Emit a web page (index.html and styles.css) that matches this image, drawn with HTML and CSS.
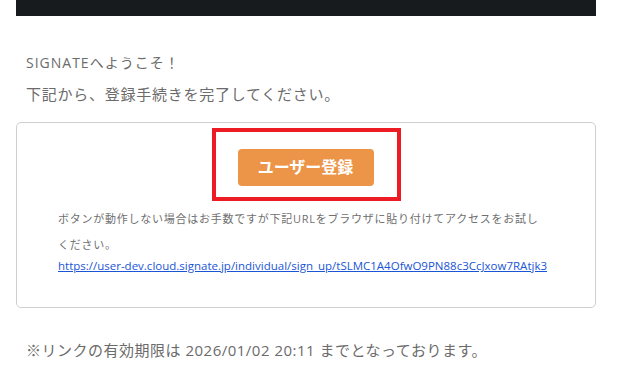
FILE: index.html
```html
<!DOCTYPE html>
<html lang="ja">
<head>
<meta charset="UTF-8">
<meta name="viewport" content="width=device-width, initial-scale=1.0">
<title>SIGNATE ユーザー登録</title>
<link rel="stylesheet" href="styles.css">
</head>
<body>

<div class="mail">
  <div class="mail-header"></div>

  <div class="greeting">
    <p class="greeting-title">SIGNATEへようこそ！</p>
    <p class="greeting-lead">下記から、登録手続きを完了してください。</p>
  </div>

  <div class="card">
    <div class="btn-wrap">
      <div class="highlight">
        <a class="btn-register" href="#">ユーザー登録</a>
      </div>
    </div>
    <p class="note">ボタンが動作しない場合はお手数ですが下記URLをブラウザに貼り付けてアクセスをお試しください。</p>
    <a class="url" href="#">https://user-dev.cloud.signate.jp/individual/sign_up/tSLMC1A4OfwO9PN88c3CcJxow7RAtjk3</a>
  </div>

  <p class="expire">※リンクの有効期限は 2026/01/02 20:11 までとなっております。</p>
</div>

</body>
</html>
```

FILE: styles.css
```css
body {
  margin: 0;
  padding: 0;
  background-color: #fff;
  font-family: "Open Sans", "Noto Sans CJK JP", sans-serif;
  color: #6b6b6b;
}
.mail {
  width: 580px;
  margin-left: 16px;
}
.mail-header {
  height: 16px;
  background-color: #181b1e;
}
.greeting {
  padding: 36px 10px 0;
}
.greeting p {
  margin: 0;
}
.greeting-title {
  font-size: 14px;
  line-height: 22px;
  letter-spacing: 1px;
}
.greeting-lead {
  font-size: 15px;
  line-height: 24px;
  letter-spacing: 0.75px;
  margin-top: 8px !important;
}
.card {
  margin-top: 16px;
  border: 1px solid #cfcfcf;
  border-radius: 5px;
  padding: 5px 50px 30px 41px;
}
.btn-wrap {
  display: flex;
  justify-content: center;
  padding-left: 9px;
}
.highlight {
  border: 4px solid #ed1c24;
  padding: 17px 23px 11px 22px;
}
.btn-register {
  display: block;
  width: 136px;
  height: 37px;
  line-height: 36px;
  text-align: center;
  background-color: #ec9549;
  color: #fff;
  font-weight: bold;
  font-size: 16px;
  border-radius: 4px;
  text-decoration: none;
}
.note {
  margin: 5px 0 0;
  font-size: 11px;
  line-height: 26px;
  letter-spacing: 0.75px;
  color: #6f6f6f;
}
.url {
  display: block;
  margin-top: -3px;
  font-size: 11.5px;
  line-height: 22px;
  color: #1a55d6;
  text-decoration: underline;
  white-space: nowrap;
}
.expire {
  margin: 31px 0 0 10px;
  font-size: 15px;
  line-height: 22px;
  letter-spacing: 0.5px;
}
```
